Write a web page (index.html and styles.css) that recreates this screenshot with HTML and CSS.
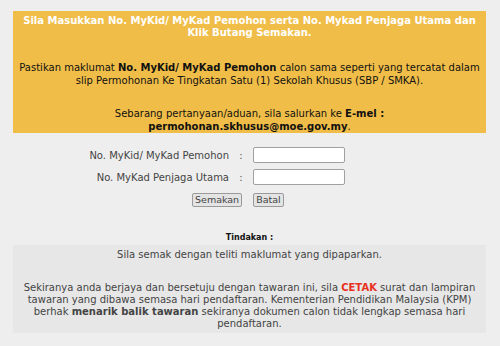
FILE: index.html
```html
<!DOCTYPE html>
<html>
<head>
<meta charset="utf-8">
<link rel="stylesheet" href="styles.css">
</head>
<body>
<div class="page">
  <div class="notice">
    <p class="title">Sila Masukkan No. MyKid/ MyKad Pemohon serta No. Mykad Penjaga Utama dan<br>Klik Butang Semakan.</p>
    <p class="info">Pastikan maklumat <b>No. MyKid/ MyKad Pemohon</b> calon sama seperti yang tercatat dalam<br>slip Permohonan Ke Tingkatan Satu (1) Sekolah Khusus (SBP / SMKA).</p>
    <p class="info contact">Sebarang pertanyaan/aduan, sila salurkan ke <b>E-mel :</b><br><b>permohonan.skhusus@moe.gov.my</b>.</p>
  </div>
  <form class="form">
    <label class="label">No. MyKid/ MyKad Pemohon</label>
    <span class="colon">:</span>
    <input class="field" type="text">
    <label class="label">No. MyKad Penjaga Utama</label>
    <span class="colon">:</span>
    <input class="field" type="text">
    <div class="buttons">
      <button class="btn" type="button">Semakan</button>
      <button class="btn" type="button">Batal</button>
    </div>
  </form>
  <div class="action-head">Tindakan :</div>
  <div class="action">
    <p class="check">Sila semak dengan teliti maklumat yang dipaparkan.</p>
    <p class="terms">Sekiranya anda berjaya dan bersetuju dengan tawaran ini, sila <b class="red">CETAK</b> surat dan lampiran<br>tawaran yang dibawa semasa hari pendaftaran. Kementerian Pendidikan Malaysia (KPM)<br>berhak <b>menarik balik tawaran</b> sekiranya dokumen calon tidak lengkap semasa hari<br>pendaftaran.</p>
  </div>
</div>
</body>
</html>
```
FILE: styles.css
```css
html, body {
  margin: 0;
  padding: 0;
  background: #eeeeee;
}
body {
  font-family: Verdana, "DejaVu Sans", sans-serif;
  font-size: 10px;
  color: #444;
}
.page {
  padding: 11px 14px 0 13px;
}
p { margin: 0; }
.notice {
  background: #f0bd48;
  padding: 4px 4px 0;
  height: 122px;
  box-sizing: border-box;
  text-align: center;
  color: #111;
  line-height: 12px;
  white-space: nowrap;
}
.title {
  color: #fff;
  font-weight: bold;
}
.info {
  margin-top: 22px;
  line-height: 13px;
}
.contact {
  margin-top: 20px;
}
.form {
  margin: 14px 0 0;
  display: grid;
  grid-template-columns: 150px 24px 92px;
  grid-auto-rows: 16px;
  row-gap: 6px;
  align-items: center;
  padding-left: 66px;
}
.label {
  text-align: right;
  white-space: nowrap;
  color: #444;
}
.colon {
  text-align: center;
  color: #555;
}
.field {
  width: 92px;
  height: 16px;
  box-sizing: border-box;
  margin: 0;
  padding: 0;
  border: 1px solid #a0a0a0;
  border-radius: 2px;
  background: #fff;
}
.buttons {
  grid-column: 1 / 4;
  display: flex;
  gap: 11px;
  padding-left: 113px;
  margin-top: 2px;
}
.btn {
  font-family: inherit;
  font-size: 9.5px;
  color: #444;
  background: #e4e4e4;
  border: 1px solid #9a9a9a;
  border-radius: 2px;
  padding: 0 2px;
  height: 14px;
  line-height: 12px;
}
.action-head {
  margin-top: 26px;
  text-align: center;
  font-weight: bold;
  font-size: 8px;
  line-height: 10px;
  color: #111;
}
.action {
  margin-top: 2px;
  background: #e7e7e7;
  height: 88px;
  text-align: center;
  line-height: 12px;
  padding: 4px 4px 0;
  box-sizing: border-box;
  white-space: nowrap;
}
.check {
  color: #444;
}
.terms {
  margin-top: 21px;
}
.red {
  color: #e8321e;
}
```
